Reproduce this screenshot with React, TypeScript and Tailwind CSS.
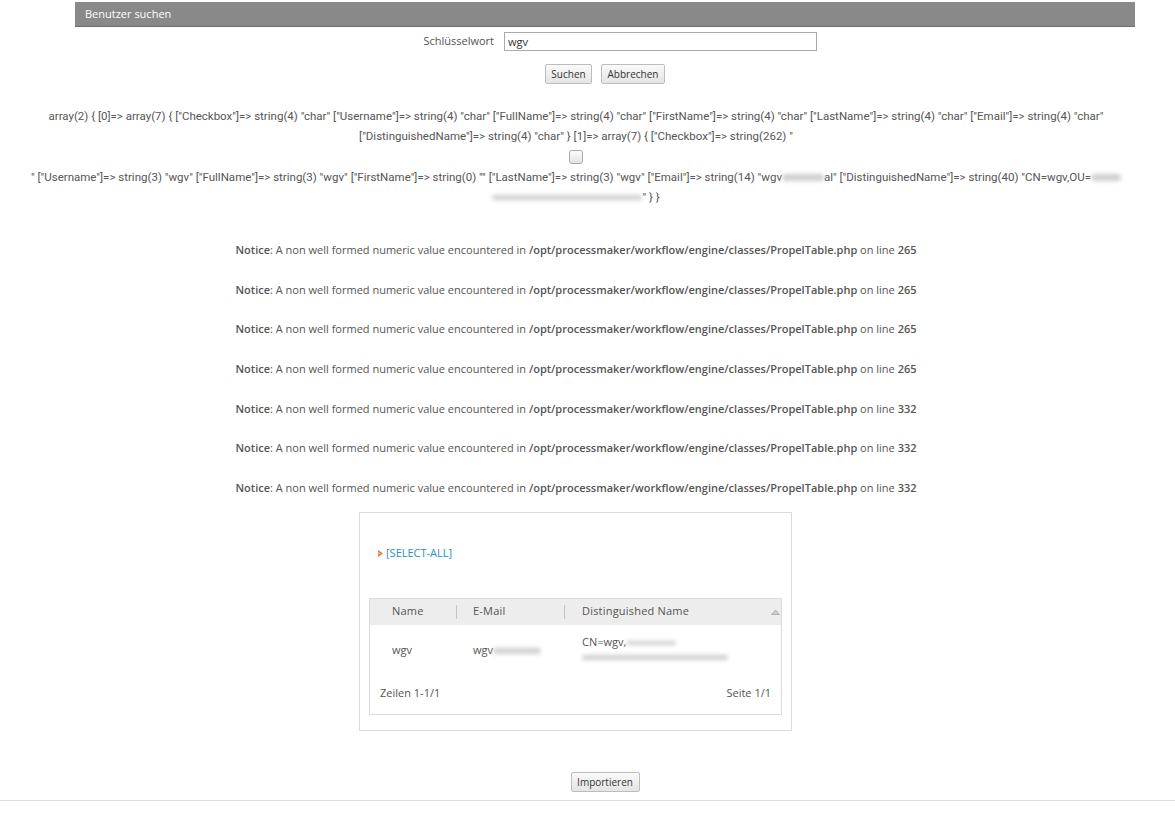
import React from 'react'

const notices = ['265', '265', '265', '265', '332', '332', '332']

function Blur({ w, h = 7, className = '' }: { w: number; h?: number; className?: string }) {
  return (
    <span
      className={`inline-block align-middle rounded-full bg-[#cfcfcf] blur-[2px] ${className}`}
      style={{ width: w, height: h }}
    />
  )
}

function Btn({ children, w }: { children: React.ReactNode; w: string }) {
  return (
    <button className={`${w} h-[20px] border border-[#bdbdbd] rounded-[2px] bg-gradient-to-b from-[#fafafa] to-[#e4e4e4] text-[10px] text-[#333] leading-none`}>
      {children}
    </button>
  )
}

export default function App() {
  return (
    <div className="w-[1175px] h-[815px] bg-white font-['Open_Sans',sans-serif] text-[#555] overflow-hidden">
      {/* title bar */}
      <div className="pt-[2px] pl-[75px]">
        <div className="w-[1060px] h-[25px] bg-[#898989] border-b border-[#6d6d6d] pl-[10px] flex items-center text-white text-[11px]">
          Benutzer suchen
        </div>
      </div>

      {/* search form */}
      <div className="flex items-center mt-[5px] h-[19px]">
        <div className="w-[494px] text-right text-[11px] text-[#555]">Schlüsselwort</div>
        <input
          readOnly
          value="wgv"
          className="ml-[10px] w-[313px] h-[19px] border border-[#aaa] px-[3px] text-[11px] text-[#333] outline-none"
        />
      </div>
      <div className="flex justify-center gap-[9px] mt-[13px] pl-[35px]">
        <Btn w="w-[47px]">Suchen</Btn>
        <Btn w="w-[64px]">Abbrechen</Btn>
      </div>

      <div className="w-[1152px]">
        {/* var_dump output */}
        <div className="mt-[22px] font-['Roboto',sans-serif] text-[11.5px] leading-[20px] text-center text-[#555]">
          <div>
            array(2) {'{'} [0]=&gt; array(7) {'{'} ["Checkbox"]=&gt; string(4) "char" ["Username"]=&gt; string(4) "char" ["FullName"]=&gt; string(4) "char" ["FirstName"]=&gt; string(4) "char" ["LastName"]=&gt; string(4) "char" ["Email"]=&gt; string(4) "char"
          </div>
          <div>
            ["DistinguishedName"]=&gt; string(4) "char" {'}'} [1]=&gt; array(7) {'{'} ["Checkbox"]=&gt; string(262) "
          </div>
          <div className="h-[21px] flex justify-center items-center">
            <span className="w-[14px] h-[14px] border border-[#a9a9a9] rounded-[3px] bg-gradient-to-b from-[#fdfdfd] to-[#e2e2e2]" />
          </div>
          <div>
            " ["Username"]=&gt; string(3) "wgv" ["FullName"]=&gt; string(3) "wgv" ["FirstName"]=&gt; string(0) "" ["LastName"]=&gt; string(3) "wgv" ["Email"]=&gt; string(14) "wgv
            <Blur w={42} />
            al" ["DistinguishedName"]=&gt; string(40) "CN=wgv,OU=
            <Blur w={30} />
          </div>
          <div>
            <Blur w={150} h={5} />
            " {'}'} {'}'}
          </div>
        </div>

        {/* notices */}
        <div className="mt-[33px] flex flex-col gap-[19.7px] text-[11px] leading-[20px] text-center text-[#555]">
          {notices.map((line, i) => (
            <div key={i}>
              <b className="font-semibold">Notice</b>: A non well formed numeric value encountered in{' '}
              <b className="font-semibold">/opt/processmaker/workflow/engine/classes/PropelTable.php</b> on line{' '}
              <b className="font-semibold">{line}</b>
            </div>
          ))}
        </div>
      </div>

      {/* result panel */}
      <div className="ml-[359px] mt-[14px] w-[433px] h-[219px] border border-[#dcdcdc] px-[9px] pt-[32px]">
        <div className="flex items-center gap-[2px] text-[11px] text-[#2a8fbd] pl-[8px]">
          <svg width="7" height="9" viewBox="0 0 7 9">
            <path d="M1 1 L6 4.5 L1 8 Z" fill="#e07a3a" />
            <path d="M1 3 L4 4.5 L1 6 Z" fill="#f5b27a" />
          </svg>
          [SELECT-ALL]
        </div>

        <div className="mt-[36px] border border-[#dcdcdc] h-[117px] flex flex-col">
          <div className="h-[26px] bg-[#ededed] flex items-center text-[11px] text-[#555] tracking-[0.2px]">
            <div className="w-[87px] pl-[22px] border-r border-[#c4c4c4] h-[14px] flex items-center">Name</div>
            <div className="w-[108px] pl-[16px] border-r border-[#c4c4c4] h-[14px] flex items-center">E-Mail</div>
            <div className="flex-1 pl-[17px] flex items-center">Distinguished Name</div>
            <svg width="9" height="6" viewBox="0 0 9 6" className="mr-[1px]">
              <path d="M0.5 5.5 L4.5 1 L8.5 5.5 Z" fill="#ccc" stroke="#999" strokeWidth="0.6" />
            </svg>
          </div>
          <div className="h-[52px] flex items-center text-[11px] text-[#555]">
            <div className="w-[87px] pl-[22px]">wgv</div>
            <div className="w-[108px] pl-[16px] flex items-center">
              wgv
              <Blur w={48} h={6} />
            </div>
            <div className="flex-1 pl-[17px] flex flex-col gap-[4px] -mt-[7px]">
              <div className="flex items-center">
                CN=wgv,
                <Blur w={50} h={4} />
              </div>
              <Blur w={146} h={5} />
            </div>
          </div>
          <div className="flex-1 flex items-center justify-between px-[10px] text-[11px] text-[#555] pb-[4px]">
            <span>Zeilen 1-1/1</span>
            <span>Seite 1/1</span>
          </div>
        </div>
      </div>

      {/* import */}
      <div className="flex justify-center mt-[41px] pl-[35px]">
        <Btn w="w-[69px]">Importieren</Btn>
      </div>
      <div className="mt-[8px] border-t border-[#ddd]" />
    </div>
  )
}
